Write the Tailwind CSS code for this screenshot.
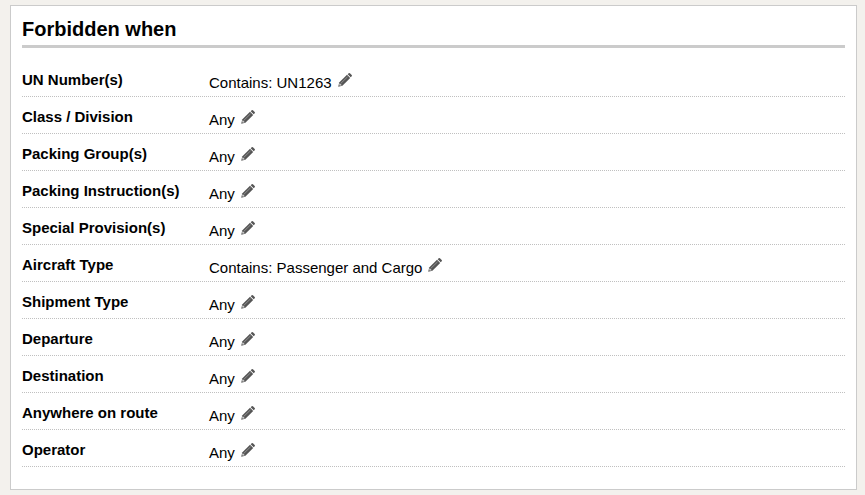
<!DOCTYPE html>
<html lang="en">
<head>
    <meta charset="UTF-8">
    <meta name="viewport" content="width=device-width, initial-scale=1.0">
    <title>Forbidden when</title>
    <script src="https://cdn.jsdelivr.net/npm/@tailwindcss/browser@4"></script>
</head>
<body class="bg-[#f3f1ed] font-['Liberation_Sans',Arial,sans-serif] text-black">
    <!-- Shared pencil icon -->
    <svg class="hidden">
        <symbol id="pencil" viewBox="0 0 14 14">
            <path fill="#555" d="M9.7 1.2 10.7.3q.6-.5 1.2 0l1.8 1.8q.5.6 0 1.2l-1 1z"/>
            <path fill="#555" d="M9 1.8 12.2 5 4.4 12.7.2 13.8 1.2 9.4z"/>
            <path fill="none" stroke="#aaa" stroke-width=".7" d="M3 10.2 9.6 3.8"/>
            <path fill="#ccc" d="m1.7 10.1 2.2 2.1-2 .6-.8-.8z"/>
        </symbol>
    </svg>

    <section class="mt-[5px] mr-2 mb-[5px] ml-[10px] border border-[#cbcbcb] bg-white px-[11px] pt-[10px] pb-[22px]">
        <h1 class="mb-3 border-b-3 border-[#cbcbcb] pb-[3px] text-[20px] leading-[26px] font-bold">Forbidden when</h1>
        <dl id="rules" class="text-[15px] leading-5"></dl>
    </section>

    <script>
        const rules = [
            ['UN Number(s)', 'Contains: UN1263'],
            ['Class / Division', 'Any'],
            ['Packing Group(s)', 'Any'],
            ['Packing Instruction(s)', 'Any'],
            ['Special Provision(s)', 'Any'],
            ['Aircraft Type', 'Contains: Passenger and Cargo'],
            ['Shipment Type', 'Any'],
            ['Departure', 'Any'],
            ['Destination', 'Any'],
            ['Anywhere on route', 'Any'],
            ['Operator', 'Any']
        ];

        document.getElementById('rules').innerHTML = rules.map(([label, value]) => `
            <div class="flex border-b border-dotted border-[#c0c0c0] pb-[3px]">
                <dt class="w-[187px] shrink-0 pt-[10px] font-bold">${label}</dt>
                <dd class="flex gap-[6px] pt-[13px]">
                    <span>${value}</span>
                    <button type="button" aria-label="Edit ${label}" class="h-3.5 w-3.5 cursor-pointer">
                        <svg class="h-3.5 w-3.5" aria-hidden="true"><use href="#pencil"/></svg>
                    </button>
                </dd>
            </div>
        `).join('');
    </script>
</body>
</html>
